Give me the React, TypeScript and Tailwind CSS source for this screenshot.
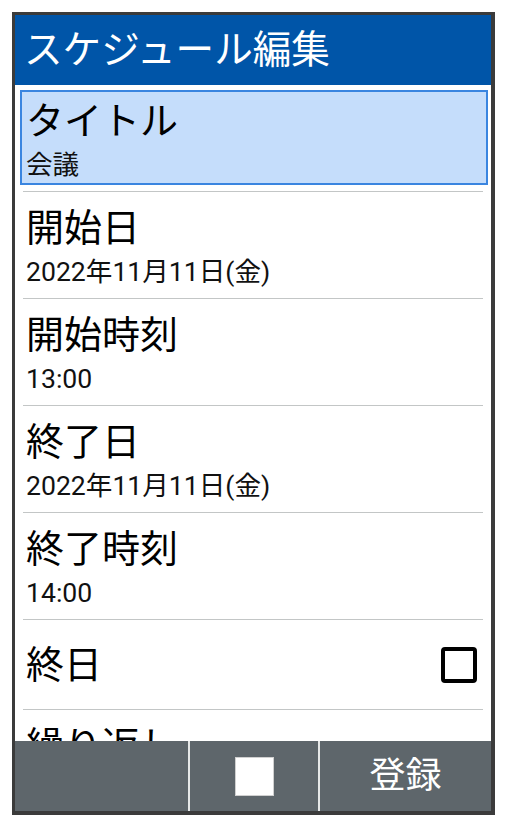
import type { ReactNode } from "react";

const font = { fontFamily: 'Roboto, "Noto Sans CJK JP", sans-serif' };

type Item = { label: string; value: string };

const items: Item[] = [
  { label: "開始日", value: "2022年11月11日(金)" },
  { label: "開始時刻", value: "13:00" },
  { label: "終了日", value: "2022年11月11日(金)" },
  { label: "終了時刻", value: "14:00" },
];

function Divider() {
  return <div className="mx-[8px] h-px bg-[#c3c6c6]" />;
}

function Row({ children }: { children: ReactNode }) {
  return <div className="h-[106px] px-[11px] pt-[13px]">{children}</div>;
}

function Label({ text }: { text: string }) {
  return <div className="h-[46px] text-[38px] leading-[46px] text-black">{text}</div>;
}

function Value({ text }: { text: string }) {
  return <div className="mt-[6px] h-[30px] text-[26.6px] leading-[30px] text-[#111]">{text}</div>;
}

export default function App() {
  return (
    <div className="min-h-screen bg-white pt-[12px] pl-[12px]" style={font}>
      <div className="flex h-[803px] w-[483px] flex-col border-[3px] border-r-[4px] border-b-[4px] border-[#3b3b3b] bg-white">
        <div className="flex h-[70px] shrink-0 items-center bg-[#0055a8] pl-[9px] text-[38.6px] leading-none text-white">
          スケジュール編集
        </div>

        <div className="h-[656px] shrink-0 overflow-hidden">
          <div className="h-[106px] pt-[5px] pr-[3px] pl-[5px]">
            <div className="h-[95px] border-2 border-[#3a85e0] bg-[#c5ddfb] px-[4px] pt-[6px]">
              <Label text="タイトル" />
              <Value text="会議" />
            </div>
          </div>
          <Divider />
          {items.map((it) => (
            <div key={it.label}>
              <Row>
                <Label text={it.label} />
                <Value text={it.value} />
              </Row>
              <Divider />
            </div>
          ))}
          <div className="flex h-[89px] items-center justify-between px-[11px]">
            <span className="text-[38px] leading-[46px] text-black">終日</span>
            <span className="mr-[3px] h-[36px] w-[36px] rounded-[4px] border-[4px] border-black" />
          </div>
          <Divider />
          <div className="px-[11px] pt-[13px]">
            <Label text="繰り返し" />
          </div>
        </div>

        <div className="flex h-[70px] shrink-0 bg-[#5e666b]">
          <div className="w-[173px]" />
          <div className="w-[2px] bg-[#e6e8e8]" />
          <div className="flex w-[128px] items-center justify-center">
            <div className="h-[39px] w-[39px] border border-[#d0d0d0] bg-white" />
          </div>
          <div className="w-[2px] bg-[#e6e8e8]" />
          <div className="flex flex-1 items-center justify-center text-[36px] leading-none text-white">
            登録
          </div>
        </div>
      </div>
    </div>
  );
}
